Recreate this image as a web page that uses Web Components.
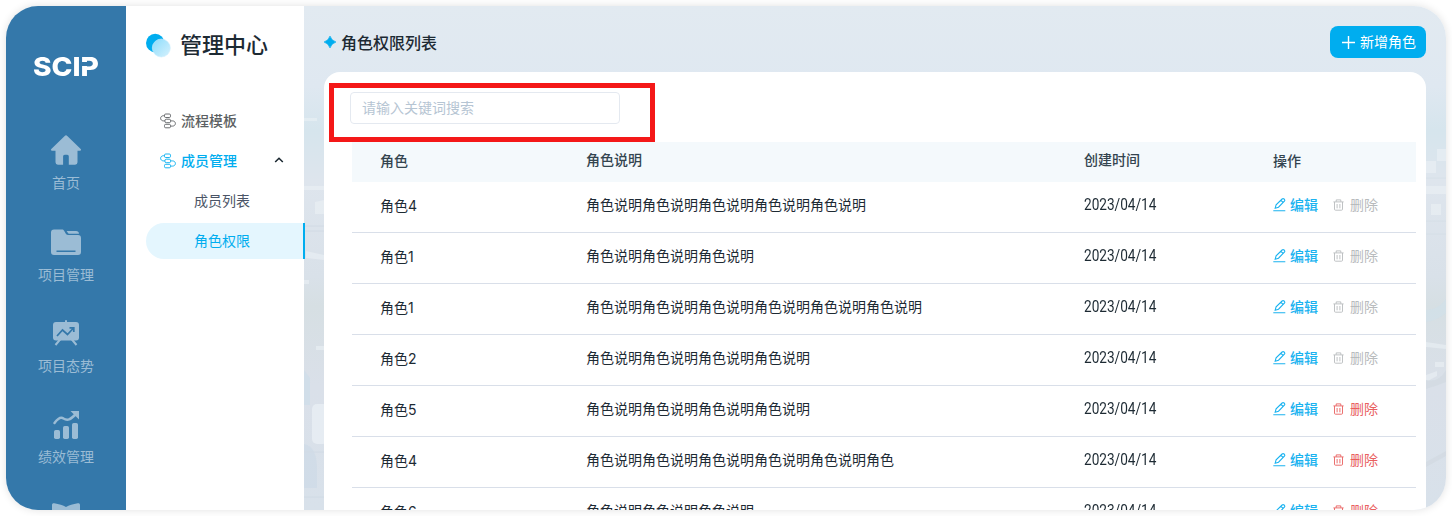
<!DOCTYPE html>
<html lang="zh-CN">
<head>
<meta charset="utf-8">
<title>角色权限列表</title>
<style>
html,body{margin:0;height:100%;background:#fff;overflow:hidden}
body{font:14px/20px "Noto Sans CJK SC","Noto Sans",sans-serif;color:#1d2a33}
</style>
</head>
<body>
<scip-app></scip-app>
<script>
const define = (name, html, after) => customElements.define(name, class extends HTMLElement {
  connectedCallback() {
    if (this.shadowRoot) return;
    const root = this.attachShadow({ mode: 'open' });
    const t = document.createElement('template');
    t.innerHTML = typeof html === 'function' ? html(this) : html;
    root.append(t.content.cloneNode(true));
    if (after) after(this, root);
  }
});

const ICONS = {
  home: '<svg width="32" height="32" viewBox="0 0 32 32"><path fill="currentColor" d="M14.700 1.900a1.900 1.900 0 0 1 2.600 0L30.700 15c.9.900.4 1.700-.9 1.700h-2.300v11.600a2.400 2.400 0 0 1-2.400 2.400h-6.300v-8.200c0-1-.6-1.700-1.600-1.700h-2.400c-1 0-1.700.7-1.700 1.700v8.200H7.900a2.400 2.400 0 0 1-2.400-2.400V16.700H2.200c-1.300 0-1.800-.8-.9-1.700z"/></svg>',
  folder: '<svg width="32" height="32" viewBox="0 0 32 32"><path fill="currentColor" d="M1 6.500a3 3 0 0 1 3-3h8c1 0 1.600.4 2.100 1.200l1.600 2.800c.6 1 1.200 1.400 2.300 1.400H28a3 3 0 0 1 3 3v14a3 3 0 0 1-3 3H4a3 3 0 0 1-3-3zM16.600 5H26a3 3 0 0 1 3 2.800h-9c-1 0-1.500-.2-2-.9z"/><path d="M6.500 25.300h19" stroke="#3478aa" stroke-width="1.500"/></svg>',
  board: '<svg width="32" height="32" viewBox="0 0 32 32"><path d="M16 3.200v4M10.500 22l-5 6M21.500 22l5 6" stroke="currentColor" stroke-width="2"/><rect x="3" y="5" width="26" height="18.500" rx="3" fill="currentColor"/><path d="M7 19l5.500-6 5 4.500 6-6.500M19.500 10.800h4.300V15" fill="none" stroke="#3478aa" stroke-width="1.700"/></svg>',
  chart: '<svg width="32" height="32" viewBox="0 0 32 32"><g fill="currentColor"><rect x="4" y="22" width="6" height="9" rx="1.700"/><rect x="13" y="18" width="6" height="13" rx="1.700"/><rect x="22" y="15" width="6" height="16" rx="1.700"/><path d="M20.500 3H29v8.500z"/></g><path d="M4.500 15c3-4 6-6.500 9-4.500 4 2.500 7 1 12-4" fill="none" stroke="currentColor" stroke-width="2.500" stroke-linecap="round"/></svg>',
  book: '<svg width="32" height="32" viewBox="0 0 32 32"><path fill="currentColor" d="M2 6c0-1.300 1-2 2.300-1.700C9 5.500 13 6 16 8c3-2 7-2.500 11.700-3.700C29 4 30 4.700 30 6v24H2z"/></svg>',
  flow: '<svg width="16" height="16" viewBox="0 0 16 16" fill="none" stroke="currentColor" stroke-width=".9"><rect x="4.500" y="1" width="6" height="3.500" rx="1.200"/><rect x="5" y="6.200" width="5.500" height="3.500" rx="1.200"/><rect x="4.500" y="11.300" width="6" height="3.500" rx="1.200"/><path d="M4.500 2.700H3.500C1.700 2.700.6 4 .6 5.300S1.700 7.900 3.500 7.900H5M10.500 7.900h2c1.800 0 2.900 1.300 2.900 2.600s-1.100 2.600-2.900 2.600h-2"/></svg>',
  edit: '<svg width="13" height="14" viewBox="0 0 13 14" fill="none" stroke="currentColor" stroke-width="1.100"><path d="M.3 12.800h12M2.200 10.200l.9-3.300 6-5.900c.6-.5 1.400-.5 2 0l.3.300c.5.600.5 1.200 0 1.800L5.500 9.200zM8 2.300l2.300 2.300"/></svg>',
  bin: '<svg width="11" height="12" viewBox="0 0 11 12" fill="none" stroke="currentColor" stroke-width=".9"><path d="M.4 2.900h10.200M3.200 2.700V.9h4.600v1.800M1.500 3v7.200c0 .7.300 1 1 1h6c.7 0 1-.3 1-1V3M4.100 5v4.300M6.900 5v4.300"/></svg>'
};

define('scip-logo', `<style>
:host{display:block;position:relative;width:66px;height:20px}
span{position:absolute;left:0;top:0;font:800 26px/20px Inter,sans-serif;color:#fff;transform-origin:0 50%;white-space:nowrap}
i{position:absolute;left:46px;top:5px;width:8px;height:4px;background:#3478aa}
</style><span>SCIP</span><i></i>`, (el, root) => {
  const s = root.querySelector('span');
  s.style.transform = `scaleX(${66 / s.offsetWidth})`;
});

define('rail-item', el => `<style>
:host{display:flex;flex-direction:column;align-items:center;height:91.300px;color:#9bbcd5;flex:none}
svg{display:block}span{margin-top:6px;line-height:20px}
</style>${ICONS[el.getAttribute('icon')]}<span><slot></slot></span>`);

define('side-rail', `<style>
:host{display:flex;flex-direction:column;align-items:center;width:120px;height:504px;background:#3478aa;overflow:hidden}
scip-logo{margin-top:51px;flex:none}nav{margin-top:57.300px}
</style><scip-logo></scip-logo><nav><rail-item icon="home">首页</rail-item><rail-item icon="folder">项目管理</rail-item><rail-item icon="board">项目态势</rail-item><rail-item icon="chart">绩效管理</rail-item><rail-item icon="book"></rail-item></nav>`);

define('menu-item', el => `<style>
:host{display:flex;align-items:center;box-sizing:border-box;height:36px;margin:0 0 4px 20px;padding:0 0 2px 14px;color:#5b5f62;font-weight:500}
svg{flex:none;margin:2px 5px 0 0}
:host([open]){color:#00adef}
:host([sub]){padding-left:48px;font-weight:400;color:#4b5567}
:host([active]){color:#00adef;background:#e4f6fe;border-radius:18px 0 0 18px;border-right:2px solid #00adef;margin-right:-1px}
.chev{margin:0 20px 0 auto;color:#1d2a33}
</style>${el.hasAttribute('sub') ? '' : ICONS.flow}<slot></slot>${el.hasAttribute('open') ? '<svg class="chev" width="10" height="8" viewBox="0 0 10 8"><path d="M1.200 6L5 2.300 8.800 6" fill="none" stroke="currentColor" stroke-width="1.600"/></svg>' : ''}`);

define('center-menu', `<style>
:host{display:block;width:178px;height:504px;background:#fff;position:relative;z-index:1}
header{display:flex;align-items:center;height:32px;padding:23px 0 0 20px;font-size:22px;font-weight:500;color:#1d2a33}
header svg{margin-right:8px}header span{margin-bottom:5px}nav{margin-top:42px}
</style><header><svg width="26" height="26" viewBox="0 0 26 26"><defs><linearGradient id="g" x1="0" y1="0" x2="1" y2="1"><stop offset="0" stop-color="#8cdcfb"/><stop offset="1" stop-color="#d6f1fd"/></linearGradient></defs><circle cx="9.200" cy="11" r="9.200" fill="#00adef"/><circle cx="15.300" cy="16" r="9" fill="url(#g)" stroke="#cfeffd" stroke-width=".6"/></svg><span>管理中心</span></header>
<nav><menu-item>流程模板</menu-item><menu-item open>成员管理</menu-item><menu-item sub>成员列表</menu-item><menu-item sub active>角色权限</menu-item></nav>`);

define('add-button', `<style>
:host{display:flex;align-items:center;box-sizing:border-box;width:96px;height:32px;padding:0 0 2px 12px;border-radius:8px;background:#00adef;color:#fff}
svg{margin:2px 5px 0 0}
</style><svg width="13" height="13" viewBox="0 0 13 13"><path d="M6.500 0v13M0 6.500h13" stroke="#fff" stroke-width="1.400"/></svg><slot></slot>`);

define('search-box', `<style>
:host{display:block;position:relative;width:270px;height:32px}
.field{box-sizing:border-box;height:32px;border:1px solid #e4e9f0;border-radius:4px;padding:0 11px;line-height:28px;color:#b6c5d3}
.mark{position:absolute;left:-21px;top:-9px;width:316px;height:49px;border:5px solid #f41818}
</style><div class="field"><slot></slot></div><div class="mark"></div>`);

define('role-row', el => `<style>
:host{display:grid;grid-template-columns:206px 498px 189px 1fr;align-items:center;box-sizing:border-box;height:51px;padding:0 0 6px 28px;border-bottom:1px solid #d9dfe9}
.name{position:relative;top:1px}
.date{padding-top:1px}
.date span{display:inline-block;font:16px/20px Roboto,sans-serif;transform-origin:0 50%;white-space:nowrap}
.ops{display:flex;align-items:center}
.e{color:#1bb3f0;margin-right:16px;font-weight:500}.d{color:#b8bbbd}
:host([removable]) .d{color:#e9605f}
.e,.d{display:flex;align-items:center}.e svg{margin:1px 4px 0 0}.d svg{margin:2px 6px 0 -1px}
</style><div class="name">${el.getAttribute('name').replace(/\d/, '<span style="font-family:Inter">$&</span>')}</div><div><slot></slot></div><div class="date"><span>2023/04/14</span></div><div class="ops"><span class="e">${ICONS.edit}编辑</span><span class="d">${ICONS.bin}删除</span></div>`,
(el, root) => { const s = root.querySelector('.date span'); s.style.transform = `scaleX(${72.3 / s.offsetWidth})`; });

define('role-table', `<style>
:host{display:block;width:1064px}
.head{display:grid;grid-template-columns:206px 498px 189px 1fr;height:40px;padding-left:28px;line-height:35px;background:#f4f9fc;color:#33444f;font-weight:500}
.low{position:relative;top:1px}
</style><div class="head"><span class="low">角色</span><span>角色说明</span><span>创建时间</span><span class="low">操作</span></div><slot></slot>`);

define('scip-app', () => {
  const rows = [['角色4', 5, ''], ['角色1', 3, ''], ['角色1', 6, ''], ['角色2', 4, ''], ['角色5', 4, '', 1], ['角色4', 5, '角色', 1], ['角色6', 3, '', 1]];
  return `<style>
:host{display:flex;box-sizing:border-box;width:1440px;height:504px;margin:6px;border-radius:32px;overflow:hidden;box-shadow:0 0 8px rgba(0,0,0,.12)}
main{position:relative;flex:1;height:504px;overflow:hidden;background:linear-gradient(#e2eaf1 0,#dfe8f1 80px,#d6e5ed 125px,#dee5ed 175px,#d9e1e9 270px,#d6dfe3 300px,#dae0e9 380px,#d8e1ea)}
.city{position:absolute;left:0;top:0;filter:blur(.7px)}
.top,.card{position:relative}
.top{display:flex;align-items:center;height:32px;padding:20px 20px 0;justify-content:space-between}
h1{display:flex;align-items:center;margin:0;font-size:16px;line-height:24px;font-weight:500}
h1 svg{margin-right:5px}
.card{box-sizing:border-box;margin:14px 20px 0;height:450px;border-radius:16px 16px 0 0;background:#fff;padding:20px 0 0 28px}
search-box{margin:0 0 18px -2px;z-index:1}
</style><side-rail></side-rail><center-menu></center-menu><main>
<svg class="city" width="1142" height="504" viewBox="0 0 1142 504" fill="#edf2f6">
<g opacity=".55"><path d="M0 112h13v3H0zM0 180h20v4H0zM11 196l9-2v14h-9zM2 245l18 4v5l-18-2zM12 340h8v4h-8zM0 274h5v4H0z"/><rect x="8" y="398" width="16" height="40" rx="5" fill="#f1f6f9"/><path d="M0 438q12 2 13 22v22H0z" fill="#cbd9e6"/><path d="M0 364l6 8v27H0z" fill="#cbdcea"/><path d="M0 220h20M0 225h20M0 446h20M0 491h20" stroke="#c9d5df"/></g>
<g opacity=".55" transform="translate(1122)"><path d="M0 155h10v12H0zM11 143h9v12h-9zM5 198h10v11H5zM0 180h20v8H0zM0 336l20 3v4l-20-2zM9 356h9v5H9zM0 369l11-4v5l-11 6z"/><path d="M0 304q12 0 20-11v14q-10 8-20 9z" fill="#cfe0eb"/><path d="M0 374q13 3 20-10v12q-7 3-20 7zM0 456l20-11v5L0 461z" fill="#cfd8df"/><path d="M0 228h20M0 215h20M0 172h20" stroke="#d1dbe4"/></g></svg>
<div class="top"><h1><svg width="12" height="12" viewBox="0 0 12 12"><path d="M6 0Q7.500 4.500 12 6 7.500 7.500 6 12 4.500 7.500 0 6 4.500 4.500 6 0z" fill="#00adef" stroke="#00adef" stroke-width=".6"/></svg><span>角色权限列表</span></h1><add-button>新增角色</add-button></div>
<div class="card"><search-box>请输入关键词搜索</search-box><role-table>${rows.map(r => `<role-row name="${r[0]}" ${r[3] ? 'removable' : ''}>${'角色说明'.repeat(r[1]) + r[2]}</role-row>`).join('')}</role-table></div></main>`;
});
</script>
</body>
</html>
